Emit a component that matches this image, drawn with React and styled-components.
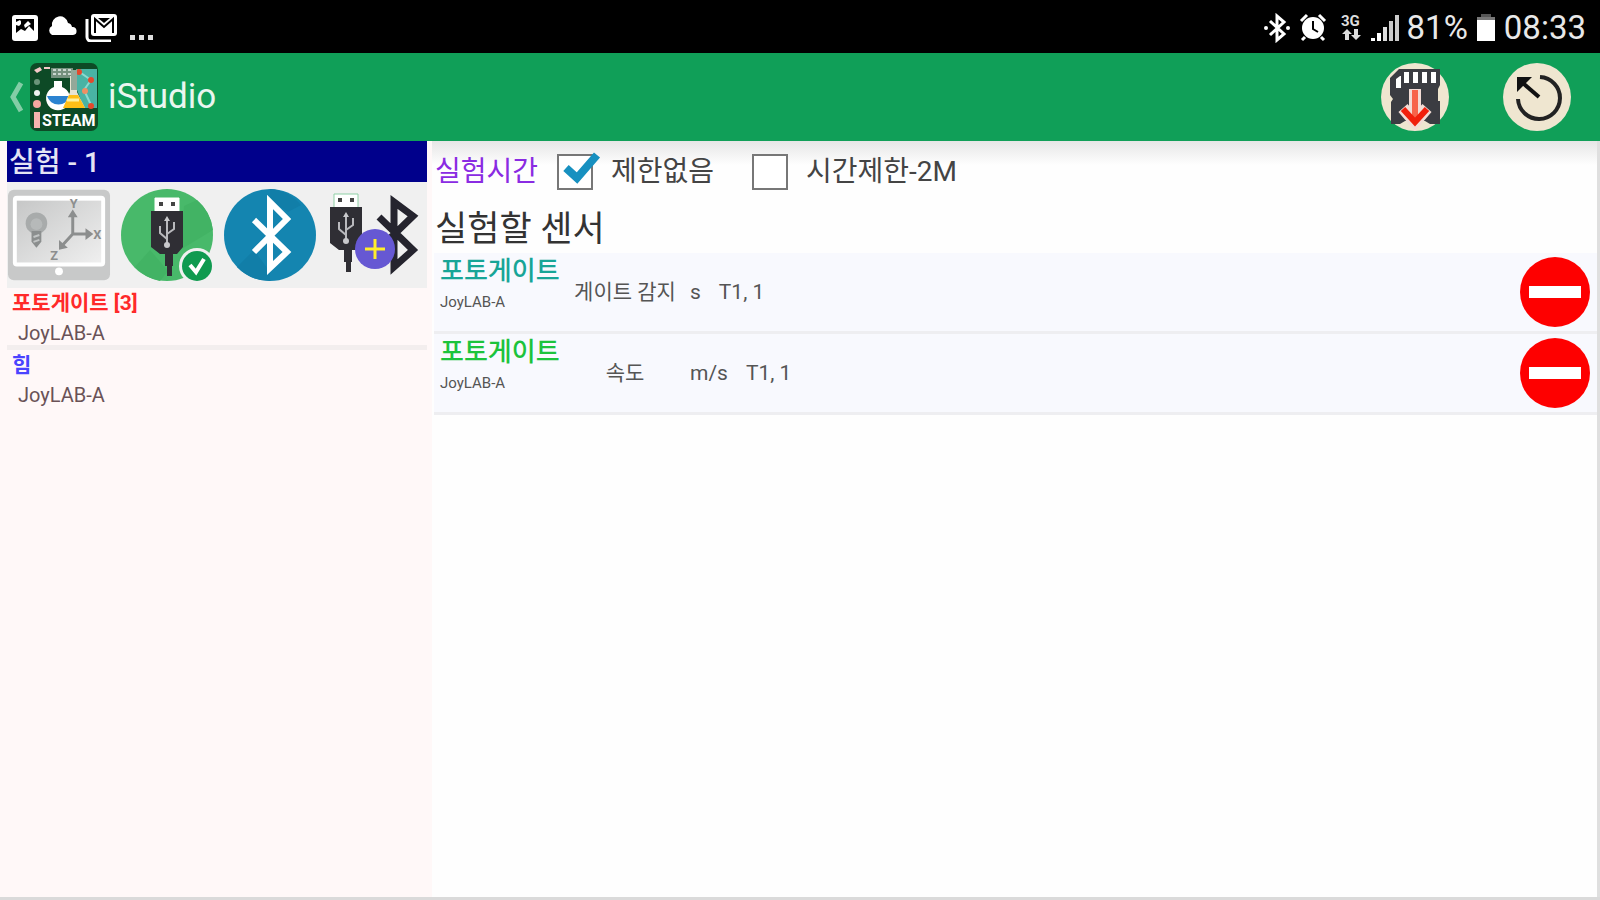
import { useState } from "react";
import styled, { createGlobalStyle } from "styled-components";

const DEVICES = [
  { id: 1, name: "포토게이트 [3]", maker: "JoyLAB-A", color: "#ff2a2a" },
  { id: 2, name: "힘", maker: "JoyLAB-A", color: "#4a44ff" },
];

const SENSORS = [
  { id: 1, name: "포토게이트", maker: "JoyLAB-A", measure: "게이트 감지", unit: "s", port: "T1, 1", color: "#17a597" },
  { id: 2, name: "포토게이트", maker: "JoyLAB-A", measure: "속도", unit: "m/s", port: "T1, 1", color: "#1cc33c" },
];

const App = () => {
  const [limit, setLimit] = useState("none");
  const [sensors, setSensors] = useState(SENSORS);

  const removeSensor = (id) => {
    setSensors(sensors.filter((sensor) => sensor.id !== id));
  };

  return (
    <Screen>
      <GlobalStyle />
      <StatusBar>
        <StatusGroup>
          <PictureIcon />
          <CloudIcon />
          <MailIcon />
          <DotsIcon />
        </StatusGroup>
        <StatusGroup>
          <StatusBluetoothIcon />
          <AlarmIcon />
          <NetworkIcon />
          <SignalIcon />
          <StatusText>81%</StatusText>
          <BatteryIcon />
          <StatusText>08:33</StatusText>
        </StatusGroup>
      </StatusBar>

      <Header>
        <HomeButton type="button">
          <BackIcon />
          <LogoIcon />
          <AppName>iStudio</AppName>
        </HomeButton>
        <Actions>
          <RoundButton type="button" aria-label="저장">
            <SdCardIcon />
          </RoundButton>
          <RoundButton type="button" aria-label="초기화">
            <ResetIcon />
          </RoundButton>
        </Actions>
      </Header>

      <Body>
        <Sidebar>
          <SidebarTitle>실험 - 1</SidebarTitle>
          <Connections>
            <ConnectButton type="button" aria-label="내장 센서">
              <TabletIcon />
            </ConnectButton>
            <ConnectButton type="button" aria-label="USB">
              <UsbIcon />
            </ConnectButton>
            <ConnectButton type="button" aria-label="블루투스">
              <BluetoothIcon />
            </ConnectButton>
            <ConnectButton type="button" aria-label="USB + 블루투스">
              <UsbBluetoothIcon />
            </ConnectButton>
          </Connections>
          <DeviceList>
            {DEVICES.map((device) => (
              <Device key={device.id}>
                <DeviceName color={device.color}>{device.name}</DeviceName>
                <DeviceMaker>{device.maker}</DeviceMaker>
              </Device>
            ))}
          </DeviceList>
        </Sidebar>

        <Main>
          <Options>
            <OptionsTitle>실험시간</OptionsTitle>
            <Option>
              <CheckArea>
                <CheckBox
                  type="checkbox"
                  checked={limit === "none"}
                  onChange={() => setLimit("none")}
                />
                {limit === "none" && <TickIcon />}
              </CheckArea>
              제한없음
            </Option>
            <Option>
              <CheckArea>
                <CheckBox
                  type="checkbox"
                  checked={limit === "time"}
                  onChange={() => setLimit("time")}
                />
                {limit === "time" && <TickIcon />}
              </CheckArea>
              시간제한-2M
            </Option>
          </Options>

          <SensorTitle>실험할 센서</SensorTitle>
          <SensorList>
            {sensors.map((sensor) => (
              <Sensor key={sensor.id}>
                <SensorInfo>
                  <SensorName color={sensor.color}>{sensor.name}</SensorName>
                  <SensorMaker>{sensor.maker}</SensorMaker>
                </SensorInfo>
                <Measure>{sensor.measure}</Measure>
                <Unit>{sensor.unit}</Unit>
                <Port>{sensor.port}</Port>
                <RemoveButton
                  type="button"
                  aria-label="삭제"
                  onClick={() => removeSensor(sensor.id)}
                />
              </Sensor>
            ))}
          </SensorList>
        </Main>
      </Body>
    </Screen>
  );
};
export default App;

// 상태바 아이콘
const PictureIcon = () => (
  <svg width="28" height="28" viewBox="0 0 28 28">
    <rect x="1" y="1" width="26" height="26" rx="3" fill="#fff" />
    <path d="M5 5h18v12l-5-5-4 5-4-2-5 4z" fill="#000" />
    <path d="M5 8l4-2 2 3-3 3-3-1zM13 11l4-4 3 3-6 4z" fill="#fff" />
    <path d="M10 7h3v3h-3z" fill="#000" />
  </svg>
);

const CloudIcon = () => (
  <svg width="30" height="28" viewBox="0 0 30 28">
    <path d="M5 21a5 5 0 0 1 0-9 8 8 0 0 1 16-3 5 5 0 0 1 4 4 4 4 0 0 1 1 8z" fill="#fff" />
  </svg>
);

const MailIcon = () => (
  <svg width="32" height="28" viewBox="0 0 32 28">
    <path d="M2 5v18a4 4 0 0 0 4 4h20" fill="none" stroke="#fff" strokeWidth="3" />
    <rect x="6" y="0" width="26" height="22" rx="3" fill="#fff" />
    <path d="M10 19V5l9 8 9-8v14" fill="none" stroke="#000" strokeWidth="2" />
    <path d="M13 4h12l-6 5z" fill="#000" />
  </svg>
);

const DotsIcon = () => (
  <svg width="30" height="28" viewBox="0 0 30 28">
    <path d="M5 21h5v5H5zM14 21h5v5h-5zM23 21h5v5h-5z" fill="#ddd" />
  </svg>
);

const StatusBluetoothIcon = () => (
  <svg width="28" height="30" viewBox="0 0 28 30">
    <path d="M7 8l14 13-7 6V3l7 6L7 22" fill="none" stroke="#fff" strokeWidth="3" />
    <circle cx="3" cy="15" r="2" fill="#fff" />
    <circle cx="25" cy="15" r="2" fill="#fff" />
  </svg>
);

const AlarmIcon = () => (
  <svg width="28" height="30" viewBox="0 0 28 30">
    <circle cx="14" cy="15" r="11" fill="#fff" />
    <path d="M2 8l6-6M26 8l-6-6M6 24l-3 3M22 24l3 3" stroke="#fff" strokeWidth="3" />
    <path d="M14 8v8l5 3" fill="none" stroke="#000" strokeWidth="2" />
  </svg>
);

const NetworkIcon = () => (
  <svg width="28" height="30" viewBox="0 0 28 30">
    <text x="6" y="13" fill="#ddd" fontFamily="Roboto, sans-serif" fontSize="15" fontWeight="700">
      3G
    </text>
    <path d="M10 27v-6H7l5-5 5 5h-3v6zM19 16v6h-3l5 5 5-5h-3v-6z" fill="#ddd" />
  </svg>
);

const SignalIcon = () => (
  <svg width="28" height="30" viewBox="0 0 28 30">
    <path d="M0 28v-3h4v3zM6 28v-8h4v8z" fill="#fff" />
    <path d="M12 28V14h4v14z" fill="#ddd" />
    <path d="M18 28V8h4v20zM24 28V2h4v26z" fill="#ccc" />
  </svg>
);

const BatteryIcon = () => (
  <svg width="20" height="30" viewBox="0 0 20 30">
    <path d="M5 1h10v3H5z" fill="#555" />
    <path d="M1 4h18v4H1z" fill="#777" />
    <path d="M1 7h18v21H1z" fill="#fff" />
  </svg>
);

// 헤더 아이콘
const BackIcon = () => (
  <svg width="16" height="32" viewBox="0 0 16 32">
    <path d="M13 2L5 16l8 14" fill="none" stroke="#83cda6" strokeWidth="5" />
  </svg>
);

const LogoIcon = () => (
  <svg width="70" height="70" viewBox="0 0 70 70">
    <rect x="1" y="1" width="68" height="68" rx="7" fill="#0d4a26" />
    <path d="M47 7h21v39H55l-7-18z" fill="#49b3a4" />
    <path d="M49 9l13 9-7 10 7 15" fill="none" stroke="#8adad0" strokeWidth="2" />
    <g fill="#e5482c">
      <circle cx="50" cy="10" r="3" />
      <circle cx="62" cy="18" r="3" />
      <circle cx="62" cy="44" r="3" />
    </g>
    <circle cx="56" cy="29" r="3" fill="#ef8f64" />
    <path d="M22 6h22v10H22z" fill="#75917e" />
    <path d="M24 8h18M24 12h18" stroke="#c9d6ce" strokeWidth="2" strokeDasharray="3 2" />
    <path d="M5 8l6-3 2 3-5 3zM15 5h6v2h-6z" fill="#f7c9c9" />
    <circle cx="8" cy="20" r="3" fill="#6b9479" />
    <circle cx="8" cy="31" r="3" fill="#f2f2f2" />
    <circle cx="8" cy="42" r="4" fill="#f5a6a0" />
    <path d="M25 19h8v6a12 12 0 1 1-8 0z" fill="#fff" />
    <path d="M18 34h23a12 12 0 0 1-23 0z" fill="#2b83d1" />
    <path d="M41 14h7v16l8 16H34l7-16z" fill="#e8e4d2" />
    <path d="M42 8h6v20h-6z" fill="#93a899" />
    <path d="M40 33h9l7 13H34z" fill="#ffbe16" />
    <path d="M38 38h12" stroke="#fff0a0" strokeWidth="3" />
    <path d="M5 50h6v16H5z" fill="#f5b3ae" />
    <text x="13" y="64" fill="#fff" fontFamily="Roboto, sans-serif" fontSize="16" fontWeight="700">
      STEAM
    </text>
  </svg>
);

const SdCardIcon = () => (
  <svg width="70" height="70" viewBox="0 0 70 70">
    <circle cx="35" cy="35" r="34" fill="#efe6d0" />
    <path d="M19 7h41v16l-2 4v12h2v23H11V40l2-3-3-4V16z" fill="#3b3c42" />
    <path d="M16 17l4-3h1v12h-5zM24 10h5v11h-5zM33 10h5v11h-5zM42 10h5v11h-5zM51 10h5v11h-5z" fill="#fff" />
    <path d="M20 62h30l-5-3H25z" fill="#efe6d0" />
    <path d="M35 27v34M23 46l12 14 12-14" fill="none" stroke="#f3dcd6" strokeWidth="12" />
    <path d="M35 28v32" stroke="#f7634a" strokeWidth="6" />
    <path d="M23 47l12 13 12-13" fill="none" stroke="#f01f0c" strokeWidth="6" />
  </svg>
);

const ResetIcon = () => (
  <svg width="70" height="70" viewBox="0 0 70 70">
    <circle cx="35" cy="35" r="34" fill="#efe6d0" />
    <path d="M38 15a21 21 0 1 1-22 22" fill="none" stroke="#222" strokeWidth="4" />
    <path d="M37 35L22 22" stroke="#111" strokeWidth="4" />
    <path d="M15 15h15L15 30z" fill="#111" />
  </svg>
);

// 연결 아이콘
const TabletIcon = () => (
  <svg width="104" height="94" viewBox="0 0 106 94">
    <defs>
      <linearGradient id="glass" x1="0" y1="0" x2="1" y2="1">
        <stop offset="0" stopColor="#c6c7c7" />
        <stop offset="1" stopColor="#efefef" />
      </linearGradient>
    </defs>
    <rect x="1" y="1" width="104" height="92" rx="6" fill="#c8c9c9" />
    <rect x="6" y="7" width="94" height="72" rx="4" fill="#fff" />
    <rect x="10" y="12" width="86" height="63" fill="url(#glass)" />
    <circle cx="53" cy="84" r="4" fill="#fff" />
    <circle cx="30" cy="35" r="11" fill="#a8abab" />
    <circle cx="30" cy="36" r="6" fill="#b6b9b9" />
    <path d="M25 43h10v11l-5 6-5-6z" fill="#8b8e8e" />
    <path d="M27 49l6-2M27 54l6-2" stroke="#c2c5c5" strokeWidth="2" />
    <g fill="none" stroke="#8c8e8e" strokeWidth="3">
      <path d="M67 46V27M67 46h18M67 46L56 58" />
    </g>
    <path d="M62 29l5-8 5 8zM80 40l8 6-8 6zM53 62v-10l9 8z" fill="#8c8e8e" />
    <g fill="#8c8e8e" fontFamily="Roboto, sans-serif" fontSize="13" fontWeight="700">
      <text x="64" y="20">Y</text>
      <text x="88" y="51">X</text>
      <text x="44" y="73">Z</text>
    </g>
  </svg>
);

const UsbPlug = ({ edge }) => (
  <g>
    <path d="M5 1h24v16H5z" fill="#fff" stroke={edge} />
    <path d="M9 5h4v4H9zM21 5h4v4h-4z" fill="#444" />
    <path d="M1 14h32v36l-6 7h-4v12h-1v10h-5V69h-2V57h-5l-9-7z" fill="#2f2e34" />
    <g fill="none" stroke="#b9b9bd" strokeWidth="2">
      <path d="M17 48V21M17 42l-7-6v-7M17 37l7-5v-7" />
    </g>
    <circle cx="17" cy="48" r="3" fill="#c9c9cc" />
    <path d="M14 24l3-5 3 5z" fill="#c9c9cc" />
  </g>
);

const UsbIcon = () => (
  <svg width="94" height="94" viewBox="0 0 94 94">
    <circle cx="47" cy="47" r="46" fill="#48b96a" />
    <path d="M64 18l13-6a46 46 0 0 1 16 30L60 62zM30 62l18 21-8 10a46 46 0 0 1-25-14z" fill="#42b364" />
    <g transform="translate(30 9)">
      <UsbPlug edge="#fff" />
    </g>
    <circle cx="77" cy="78" r="18" fill="#f0f0f0" />
    <circle cx="77" cy="78" r="15" fill="#109a50" />
    <path d="M70 77l6 7 8-13" fill="none" stroke="#fff" strokeWidth="4" />
  </svg>
);

const BluetoothIcon = () => (
  <svg width="94" height="94" viewBox="0 0 94 94">
    <circle cx="47" cy="47" r="46" fill="#1485b0" />
    <path d="M47 12l18 12 13-7A46 46 0 0 0 47 1zM14 79l17-17 16 22v9a46 46 0 0 1-33-14z" fill="#117ea8" />
    <path d="M31 32l33 32-17 16V14l17 17-33 33" fill="none" stroke="#fff" strokeWidth="6" />
  </svg>
);

const UsbBluetoothIcon = () => (
  <svg width="94" height="94" viewBox="0 0 94 94">
    <g transform="translate(3 5)">
      <UsbPlug edge="#8fd0a6" />
    </g>
    <path d="M53 29l34 33-19 17V14l19 14-34 33" fill="none" stroke="#25242e" strokeWidth="7" />
    <circle cx="49" cy="61" r="20" fill="#6658d3" />
    <path d="M49 51v20M39 61h20" stroke="#ffee2b" strokeWidth="3" />
  </svg>
);

const TickIcon = () => (
  <Tick width="42" height="42" viewBox="0 0 42 42">
    <path d="M6 17l11 10L37 4" fill="none" stroke="#1790c0" strokeWidth="8" />
  </Tick>
);

const GlobalStyle = createGlobalStyle`
  * {
    box-sizing: border-box;
  }

  body {
    margin: 0;
    font-family: Roboto, "Noto Sans CJK KR", sans-serif;
  }

  button {
    padding: 0;
    border: 0;
    background: none;
    font-family: inherit;
    cursor: pointer;
  }

  svg {
    display: block;
    flex-shrink: 0;
  }
`;

const Screen = styled.div`
  display: flex;
  flex-direction: column;
  min-height: 100vh;
  border-bottom: 3px solid #dadada;
  background-color: #fefefe;
`;

// 상태바
const StatusBar = styled.div`
  display: flex;
  align-items: center;
  justify-content: space-between;
  height: 53px;
  padding: 2px 14px 0 11px;
  background-color: #000;
`;

const StatusGroup = styled.div`
  display: flex;
  align-items: center;
  gap: 8px;
`;

const StatusText = styled.span`
  color: #e8e8e8;
  font-size: 33px;
  line-height: 40px;
`;

// 헤더
const Header = styled.header`
  display: flex;
  align-items: center;
  justify-content: space-between;
  height: 88px;
  padding: 0 28px 0 8px;
  background-color: #109f58;
`;

const HomeButton = styled.button`
  display: flex;
  align-items: center;
  gap: 5px;
`;

const AppName = styled.span`
  padding-left: 4px;
  color: #e9f6ef;
  font-size: 35px;
  line-height: 40px;
`;

const Actions = styled.div`
  display: flex;
  gap: 52px;
`;

const RoundButton = styled.button`
  border-radius: 50%;
`;

const Body = styled.div`
  display: flex;
  flex: 1;
`;

// 왼쪽 영역
const Sidebar = styled.aside`
  width: 27%;
  padding: 0 5px 0 7px;
  background-color: #fff8f8;
`;

const SidebarTitle = styled.h2`
  margin: 0;
  padding: 2px 0 0 2px;
  background-color: #00008b;
  color: #e4e4f4;
  font-size: 28px;
  font-weight: 500;
  line-height: 39px;
`;

const Connections = styled.div`
  display: flex;
  gap: 9px;
  padding: 6px 0;
  background-color: #f0f0f0;
`;

const ConnectButton = styled.button`
  border-radius: 6px;
`;

const DeviceList = styled.ul`
  margin: 0;
  padding: 0;
  list-style: none;
`;

const Device = styled.li`
  padding-left: 5px;

  & + & {
    border-top: 5px solid #f3eeee;
  }
`;

const DeviceName = styled.div`
  color: ${(props) => props.color};
  font-size: 21px;
  font-weight: 700;
  line-height: 31px;
`;

const DeviceMaker = styled.div`
  padding: 2px 0 0 6px;
  color: #6a5257;
  font-size: 20px;
  line-height: 24px;
`;

// 오른쪽 영역
const Main = styled.main`
  flex: 1;
  border-right: 3px solid #dfdfdf;
  background: linear-gradient(#e6e6e6, #fefefe 24px);
`;

const Options = styled.div`
  display: flex;
  align-items: center;
  height: 62px;
  padding-left: 3px;
  color: #444;
  font-size: 28px;
  line-height: 40px;
`;

const OptionsTitle = styled.span`
  width: 122px;
  color: #8a2be2;
`;

const Option = styled.label`
  display: flex;
  align-items: center;
  gap: 18px;
  margin-right: 38px;
  cursor: pointer;
`;

const CheckArea = styled.span`
  position: relative;
  display: flex;
`;

const CheckBox = styled.input`
  appearance: none;
  width: 36px;
  height: 36px;
  margin: 0;
  border: 2px solid #777;
  background-color: #fff;
`;

// 체크 표시는 박스 밖으로 살짝 나온다
const Tick = styled.svg`
  position: absolute;
  top: -3px;
  left: 3px;
  pointer-events: none;
`;

const SensorTitle = styled.h3`
  margin: 0;
  padding: 3px 0 0 3px;
  color: #333;
  font-size: 35px;
  font-weight: 400;
  line-height: 47px;
`;

const SensorList = styled.ul`
  margin: 0 0 0 2px;
  padding: 0;
  list-style: none;
`;

const Sensor = styled.li`
  display: flex;
  align-items: center;
  padding-right: 7px;
  border-bottom: 3px solid #eeeef1;
  background-color: #f8f9fe;
  color: #555;
  font-size: 21px;
  line-height: 30px;
`;

const SensorInfo = styled.div`
  align-self: flex-start;
  width: 126px;
  padding-left: 6px;
`;

const SensorName = styled.div`
  color: ${(props) => props.color};
  font-size: 26px;
  font-weight: 500;
  line-height: 37px;
`;

const SensorMaker = styled.div`
  font-size: 15px;
  line-height: 24px;
`;

const Measure = styled.span`
  width: 130px;
  text-align: center;
`;

const Unit = styled.span`
  margin-right: 18px;
`;

const Port = styled.span`
  flex: 1;
`;

const RemoveButton = styled.button`
  display: flex;
  align-items: center;
  justify-content: center;
  width: 70px;
  height: 70px;
  margin: 4px 0;
  border-radius: 50%;
  background-color: #fe0000;

  &::before {
    content: "";
    width: 52px;
    height: 12px;
    background-color: #fff;
  }
`;
